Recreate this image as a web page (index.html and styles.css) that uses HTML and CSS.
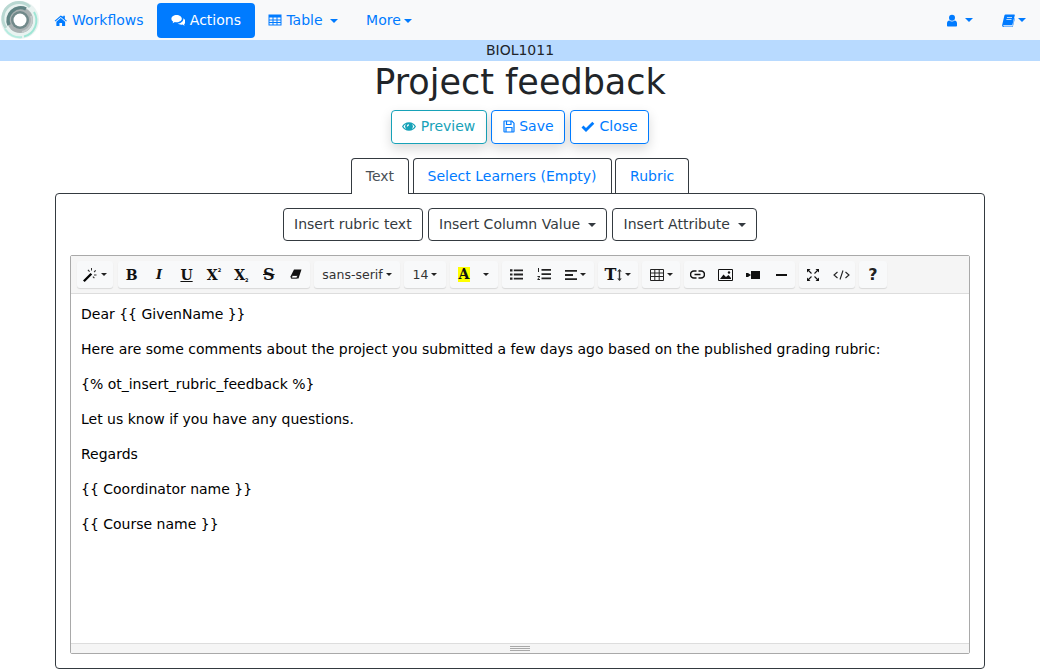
FILE: index.html
```html
<!DOCTYPE html>
<html lang="en">
<head>
    <meta charset="UTF-8">
    <title>Project feedback</title>
    <link rel="stylesheet" href="styles.css">
</head>
<body>
    <nav class="navbar">
        <div class="logo">
            <svg width="40" height="40" viewBox="0 0 40 40">
                <circle cx="20" cy="20" r="19" fill="#e9f3f1"/>
                <path d="M6 28A16 16 0 0 1 30 7" fill="none" stroke="#b9d8d2" stroke-width="3"/>
                <path d="M34 12a16.500 16.500 0 0 1-10 24.500" fill="none" stroke="#9fe6d5" stroke-width="2"/>
                <path d="M5 29a17 17 0 0 0 17 8" fill="none" stroke="#b5ece0" stroke-width="2"/>
                <circle cx="20" cy="20" r="13" fill="#a9b1b2"/>
                <path d="M9 25A12.500 12.500 0 0 1 26 9" fill="none" stroke="#5f8383" stroke-width="3.500"/>
                <path d="M31 16a12 12 0 0 1-9 16" fill="none" stroke="#c4cccc" stroke-width="2"/>
                <circle cx="20" cy="20" r="9" fill="#71898a"/>
                <circle cx="20" cy="20" r="6.500" fill="#fff"/>
            </svg>
        </div>
        <a class="nav-link nav-home" href="#">
            <svg class="ico" width="13.500" height="13" viewBox="0 0 14 14"><path d="M7 1.600 0.400 7.300l.8.900L7 3.200l5.800 5 .8-.9-2.200-1.900V2h-1.700v1L7 1.600zM2.300 8.300v4.600h3.300V9.600h2.800v3.300h3.300V8.300L7 4.300z" fill="currentColor"/></svg>
            Workflows
        </a>
        <a class="nav-link active" href="#">
            <svg class="ico" width="14.500" height="14" viewBox="0 0 15 14"><path d="M5.800 1.800C2.800 1.800.4 3.500.4 5.700c0 1.200.7 2.300 1.900 3-.2.7-.6 1.200-1 1.600 1-.1 1.900-.5 2.700-1.200.6.100 1.200.2 1.800.2 3 0 5.400-1.700 5.400-3.600 0-2.200-2.400-3.900-5.400-3.900z" fill="currentColor"/><path d="M12.700 5.100c.1.300.1.500.1.800 0 2.500-2.600 4.500-5.900 4.800.9.800 2.200 1.200 3.600 1.200.5 0 1-.1 1.500-.2.600.6 1.400 1 2.400 1.100-.4-.4-.7-.9-.9-1.500 1-.6 1.500-1.500 1.500-2.500 0-1.500-1-2.900-2.300-3.700z" fill="currentColor"/></svg>
            Actions
        </a>
        <a class="nav-link caret" href="#">
            <svg class="ico ico-table" width="14" height="14" viewBox="0 0 14 14"><path d="M.5 1.500h13v11H.5zM1.500 4.500v2h3v-2zm4 0v2h3v-2zm4 0v2h3v-2zm-8 3v1.500h3V7.500zm4 0v1.500h3V7.500zm4 0v1.500h3V7.500zm-8 2.500v1.500h3V10zm4 0v1.500h3V10zm4 0v1.500h3V10z" fill="currentColor" fill-rule="evenodd"/></svg>
            Table
        </a>
        <a class="nav-link caret" href="#">More</a>
        <div class="nav-right">
            <a class="nav-icon nav-user" href="#">
                <svg width="10" height="13" viewBox="0 0 11 13"><circle cx="5.500" cy="3.500" r="3.300" fill="currentColor"/><path d="M0 12.200V9.500C0 7.800 1.200 6.500 2.600 6.500c.8.700 1.800 1.100 2.900 1.100s2.100-.4 2.900-1.100C9.800 6.500 11 7.800 11 9.500v2.700c0 .4-.4.800-.8.800H.8c-.4 0-.8-.4-.8-.8z" fill="currentColor"/></svg>
            </a>
            <a class="nav-icon" href="#">
                <svg width="13" height="13" viewBox="0 0 13 13"><path d="M3.500.500h8.800c.4 0 .6.300.5.700l-2.300 9.300c-.1.500-.5.800-1 .8H1.800c-.5 0-.6.300-.5.600.1.300.4.500.8.500h8.300l2.200-8.400.4.300-2.300 8.800c-.1.300-.3.400-.6.400H1.700C.8 13 0 12.200.1 11.200L2.400 1.400C2.500.900 3 .500 3.500.500z" fill="currentColor"/><path d="M5 3h5v.8H4.800zM4.500 5h5v.8H4.300z" fill="#f8f9fa"/></svg>
            </a>
        </div>
    </nav>
    <div class="course-band">BIOL1011</div>

    <h1 class="page-title">Project feedback</h1>

    <div class="page-actions">
        <a class="btn btn-info" href="#">
            <svg class="ico" width="14" height="13" viewBox="0 0 15 14"><path d="M7.500 2.400C4.100 2.400 1.300 4.400 0 7c1.300 2.600 4.100 4.600 7.500 4.600S13.700 9.600 15 7c-1.300-2.600-4.100-4.600-7.500-4.600zM1.500 7c.7-1.100 1.700-2 2.900-2.600a3.900 3.900 0 0 0 0 5.200C3.200 9 2.200 8.100 1.500 7zm12 0c-.7 1.100-1.700 2-2.900 2.600a3.900 3.900 0 0 0 0-5.200c1.200.6 2.200 1.500 2.900 2.600z" fill="currentColor" fill-rule="evenodd"/><path d="M7.500 4.600a2.400 2.400 0 0 0-2.400 2.400h1.200a1.200 1.200 0 0 1 1.200-1.200z" fill="#fff"/></svg>
            Preview
        </a>
        <a class="btn btn-primary btn-save" href="#">
            <svg class="ico" width="12" height="13" viewBox="0 0 12 13"><path d="M1.500 1h7.300L11 3.200v8.300c0 .3-.2.500-.5.500h-9c-.3 0-.5-.2-.5-.5v-10c0-.3.200-.5.500-.5z" fill="none" stroke="currentColor" stroke-width="1.200"/><path d="M3.500 1v3.500h4.500V1M3 12V7.500h6V12" fill="none" stroke="currentColor" stroke-width="1.200"/></svg>
            Save
        </a>
        <a class="btn btn-primary" href="#">
            <svg class="ico" width="14" height="12" viewBox="0 0 14 12"><path d="M.5 6.400 2.500 4.400 5 6.900 11.300.8l2 2L5 11z" fill="currentColor"/></svg>
            Close
        </a>
    </div>

    <ul class="tabs">
        <li class="tab active">Text</li>
        <li class="tab">Select Learners (Empty)</li>
        <li class="tab">Rubric</li>
    </ul>

    <div class="panel">
        <div class="insert-row">
            <button class="btn-outline">Insert rubric text</button>
            <button class="btn-outline caret">Insert Column Value</button>
            <button class="btn-outline caret">Insert Attribute</button>
        </div>

        <div class="editor">
            <div class="toolbar">
                <div class="tb-group g-magic">
                    <span class="tb-btn sm-caret">
                        <svg width="15" height="14" viewBox="0 0 15 14"><path d="M0 12.400 7.500 4.900l1.700 1.700L1.700 14z" fill="#000"/><path d="M8 0h1v2.500H8zM12.300 2l.8.800-1.600 1.600-.8-.8zM4.500 2.300l.8-.8L7 3.200l-.8.800zM11 6.500h2.500v1H11zM9.500 9l.8-.8 1.500 1.500-.8.800z" fill="#333"/></svg>
                    </span>
                </div>
                <div class="tb-group g-style">
                    <span class="tb-btn"><b class="glyph">B</b></span>
                    <span class="tb-btn"><i class="glyph">I</i></span>
                    <span class="tb-btn"><u class="glyph">U</u></span>
                    <span class="tb-btn"><b class="glyph">X</b><span class="script script-up">2</span></span>
                    <span class="tb-btn"><b class="glyph">X</b><span class="script script-down">2</span></span>
                    <span class="tb-btn"><s class="glyph glyph-big">S</s></span>
                    <span class="tb-btn"><svg width="12" height="11" viewBox="0 0 12 11"><path d="M4 .500h7.500L8.500 9.500H1L.5 7.500z" fill="#111"/><path d="M2.200 6.500h5.500l-.8 2.500H1.500z" fill="#fff" stroke="#111" stroke-width=".8"/></svg></span>
                </div>
                <div class="tb-group g-font"><span class="tb-text sm-caret">sans-serif</span></div>
                <div class="tb-group g-size"><span class="tb-text sm-caret">14</span></div>
                <div class="tb-group g-color">
                    <span class="tb-btn btn-a"><span class="color-glyph">A</span></span>
                    <span class="tb-btn btn-a-menu sm-caret"></span>
                </div>
                <div class="tb-group g-list">
                    <span class="tb-btn btn-ul"><svg width="13" height="11" viewBox="0 0 13 11"><path d="M0 .300h2.500v2.200H0zM0 4.400h2.500v2.200H0zM0 8.500h2.500v2.200H0zM3.800.500H13v1.800H3.800zM3.800 4.600H13v1.800H3.800zM3.800 8.700H13v1.800H3.800z" fill="#222"/></svg></span>
                    <span class="tb-btn btn-ol"><svg width="14" height="13" viewBox="0 0 14 13"><path d="M1 0h1v4H1zM.5 8h2.500v.8L1.500 11H3v1H.4v-.8L2 9H.5zM4.500 1H14v1.800H4.500zM4.500 5.200H14v1.800H4.500zM4.500 9.400H14v1.800H4.500z" fill="#222"/></svg></span>
                    <span class="tb-btn btn-align sm-caret"><svg width="12" height="10" viewBox="0 0 12 10"><path d="M0 0h12v1.800H0zM0 4.100h8v1.800H0zM0 8.200h12V10H0z" fill="#222"/></svg></span>
                </div>
                <div class="tb-group g-height">
                    <span class="tb-btn sm-caret"><b class="glyph glyph-big">T</b><svg class="updown" width="5" height="12" viewBox="0 0 5 12"><path d="M2.500 0l2.300 2.500H3.200v7h1.600L2.500 12 .2 9.500h1.600v-7H.2z" fill="#333"/></svg></span>
                </div>
                <div class="tb-group g-table">
                    <span class="tb-btn sm-caret"><svg width="14" height="12" viewBox="0 0 14 12"><path d="M.5.500h13v11H.5zM.5 4h13M.5 7.500h13M4.800.500v11M9.200.500v11" fill="none" stroke="#222"/></svg></span>
                </div>
                <div class="tb-group g-insert">
                    <span class="tb-btn"><svg width="15" height="9" viewBox="0 0 15 9"><path d="M6.500 1H4a3.500 3.500 0 0 0 0 7h2.500M8.500 1H11a3.500 3.500 0 0 1 0 7H8.500M4.500 4.500h6" fill="none" stroke="#111" stroke-width="1.600"/></svg></span>
                    <span class="tb-btn"><svg width="15" height="12" viewBox="0 0 15 12"><path d="M.5.500h14v11H.5z" fill="none" stroke="#111"/><path d="M2 10 5.500 5.500 8 8l2.500-2 2.500 3v1z" fill="#111"/><circle cx="11" cy="3.500" r="1.200" fill="#111"/></svg></span>
                    <span class="tb-btn"><svg width="14" height="8" viewBox="0 0 14 8"><path d="M5 0h9v8H5z" fill="#111"/><path d="M0 2h2l3 2-3 2H0z" fill="#111"/></svg></span>
                    <span class="tb-btn"><svg width="11" height="2" viewBox="0 0 11 2"><path d="M0 0h11v2H0z" fill="#111"/></svg></span>
                </div>
                <div class="tb-group g-view">
                    <span class="tb-btn"><svg width="12" height="12" viewBox="0 0 12 12"><path d="M1 1l3.500 3.500M11 1 7.500 4.500M1 11l3.500-3.500M11 11 7.500 7.500" stroke="#111" stroke-width="1.100"/><path d="M0 0h3.500L0 3.500zM12 0v3.500L8.500 0zM0 12V8.500L3.500 12zM12 12H8.500L12 8.500z" fill="#111"/></svg></span>
                    <span class="tb-btn"><svg width="17" height="10" viewBox="0 0 17 10"><path d="M4.500 2 1 5l3.500 3M12.500 2 16 5l-3.500 3M10 .500 7 9.500" fill="none" stroke="#222" stroke-width="1.100"/></svg></span>
                </div>
                <div class="tb-group g-help">
                    <span class="tb-btn"><b class="help-glyph">?</b></span>
                </div>
            </div>
            <div class="editable">
                <p>Dear {{ GivenName }}</p>
                <p>Here are some comments about the project you submitted a few days ago based on the published grading rubric:</p>
                <p>{% ot_insert_rubric_feedback %}</p>
                <p>Let us know if you have any questions.</p>
                <p>Regards</p>
                <p>{{ Coordinator name }}</p>
                <p>{{ Course name }}</p>
            </div>
            <div class="statusbar"><span class="grip"></span></div>
        </div>
    </div>
</body>
</html>
```

FILE: styles.css
```css
* {
    box-sizing: border-box;
}
html, body {
    height: 669px;
    overflow: hidden;
}
body {
    margin: 0;
    font-family: "DejaVu Sans", sans-serif;
    font-size: 14px;
    color: #212529;
    background-color: #fff;
}
a {
    text-decoration: none;
}
.ico {
    vertical-align: -2px;
}
.ico-table {
    margin: 0 -0.500px;
}

/* navbar */
.navbar {
    display: flex;
    align-items: center;
    height: 40px;
    background-color: #f8f9fa;
}
.logo {
    width: 40px;
    height: 40px;
    background-color: #fff;
}
.nav-link {
    display: block;
    height: 35px;
    line-height: 35px;
    padding: 0 14px;
    color: #007bff;
    border-radius: 4px;
    white-space: nowrap;
    margin-top: 1px;
}
.nav-home {
    margin-right: -0.700px;
}
.nav-link.active {
    background-color: #007bff;
    color: #fff;
}
.caret::after {
    content: "";
    display: inline-block;
    margin-left: 3px;
    vertical-align: 2px;
    border-top: 4px solid currentColor;
    border-left: 4px solid transparent;
    border-right: 4px solid transparent;
}
.nav-right {
    display: flex;
    margin-left: auto;
    gap: 29px;
    padding-right: 14px;
}
.nav-icon {
    color: #007bff;
    display: flex;
    align-items: center;
    height: 20px;
}
.nav-icon::after {
    content: "";
    margin-left: 3px;
    border-top: 4px solid currentColor;
    border-left: 4px solid transparent;
    border-right: 4px solid transparent;
}
.nav-user::after {
    margin-left: 8px;
}
.course-band {
    height: 21px;
    line-height: 21px;
    background-color: #b8daff;
    text-align: center;
    font-size: 14px;
}

/* heading and buttons */
.page-title {
    margin: 0;
    height: 49px;
    line-height: 42px;
    font-size: 35px;
    font-weight: 400;
    text-align: center;
}
.page-actions {
    display: flex;
    justify-content: center;
    gap: 4.500px;
}
.btn {
    display: block;
    height: 34px;
    line-height: 31px;
    padding: 0 10.500px;
    border: 1px solid #007bff;
    border-radius: 4px;
    color: #007bff;
    white-space: nowrap;
    box-shadow: 0 5px 12px rgba(0, 0, 0, 0.15);
}
.btn-info {
    border-color: #17a2b8;
    color: #17a2b8;
}

/* tabs */
.tabs {
    display: flex;
    justify-content: center;
    gap: 3.500px;
    list-style: none;
    margin: 14px 0 0;
    padding: 0;
    height: 35px;
    position: relative;
    z-index: 1;
}
.tab {
    height: 35px;
    line-height: 34px;
    padding: 0 14px;
    border: 1px solid #343a40;
    border-bottom: 0;
    border-radius: 4px 4px 0 0;
    color: #007bff;
}
.tab.active {
    color: #495057;
    background-color: #fff;
    height: 36px;
}

/* main panel */
.panel {
    width: 930px;
    height: 476px;
    margin: 0 auto;
    padding: 14px;
    border: 1px solid #343a40;
    border-radius: 4px;
}
.insert-row {
    display: flex;
    justify-content: center;
    gap: 5px;
}
.btn-outline {
    height: 33px;
    padding: 0 10.200px 2px;
    font-family: inherit;
    font-size: 14px;
    color: #343a40;
    background-color: #fff;
    border: 1px solid #343a40;
    border-radius: 4px;
    white-space: nowrap;
}
.btn-outline.caret::after {
    margin-left: 8px;
}

/* editor */
.editor {
    display: flex;
    flex-direction: column;
    height: 399px;
    margin-top: 14px;
    border: 1px solid #a9a9a9;
    border-radius: 2px;
}
.toolbar {
    display: flex;
    gap: 4px;
    height: 38px;
    padding: 5px 0 0 6px;
    background-color: #f5f5f5;
    border-bottom: 1px solid #ddd;
}
.tb-group {
    display: flex;
    align-items: center;
    height: 27px;
    background-color: #f8f9fa;
    border-radius: 3px;
    box-shadow: 0 1px 1px rgba(0, 0, 0, 0.12);
}
.tb-btn {
    display: flex;
    align-items: center;
    justify-content: center;
    flex: 1;
    height: 27px;
    color: #111;
}
.tb-text {
    display: flex;
    align-items: center;
    justify-content: center;
    width: 100%;
    font-size: 12.500px;
    color: #333;
}
.sm-caret::after {
    content: "";
    margin-left: 3px;
    border-top: 3px solid #222;
    border-left: 3px solid transparent;
    border-right: 3px solid transparent;
}
.glyph {
    font-family: "DejaVu Serif", serif;
    font-size: 14px;
    font-weight: 700;
    line-height: 16px;
}
.glyph-big {
    font-size: 16px;
}
i.glyph {
    font-size: 13px;
}
.script {
    align-self: center;
    font-size: 5px;
    font-weight: 700;
    line-height: 5px;
}
.script-up {
    margin-top: -9px;
}
.script-down {
    margin-top: 11px;
}
.updown {
    margin-left: 1px;
}
.help-glyph {
    font-size: 16px;
    font-weight: 700;
    color: #222;
}
.g-magic { width: 36px; margin-right: 1px; }
.g-style { width: 192px; }
.g-font { width: 86px; }
.g-size { width: 42px; }
.g-color { width: 48px; }
.g-list { width: 92px; }
.g-height { width: 40px; }
.g-table { width: 38px; }
.g-insert { width: 111px; }
.g-view { width: 56px; }
.g-help { width: 28px; }
.btn-a { flex: none; width: 28px; }
.btn-a-menu { flex: none; width: 16px; }
.btn-a-menu::after { margin-left: 0; }
.btn-ul { flex: none; width: 29px; }
.btn-ol { flex: none; width: 26px; }
.btn-align { flex: none; width: 37px; }
.color-glyph {
    width: 12px;
    height: 15px;
    line-height: 15px;
    text-align: center;
    background-color: #ff0;
    color: #111;
    font-family: "DejaVu Serif", serif;
    font-size: 14px;
    font-weight: 700;
}
.editable {
    flex: 1;
    padding: 10px;
    color: #000;
    background-color: #fff;
}
.editable p {
    margin: 0 0 15px;
    line-height: 20px;
}
.statusbar {
    display: flex;
    justify-content: center;
    align-items: center;
    height: 10px;
    background-color: #f5f5f5;
    border-top: 1px solid #ddd;
}
.grip {
    width: 20px;
    height: 5px;
    border-top: 1px solid #a9a9a9;
    border-bottom: 1px solid #a9a9a9;
    background: linear-gradient(#a9a9a9, #a9a9a9) center / 100% 1px no-repeat;
}
```
